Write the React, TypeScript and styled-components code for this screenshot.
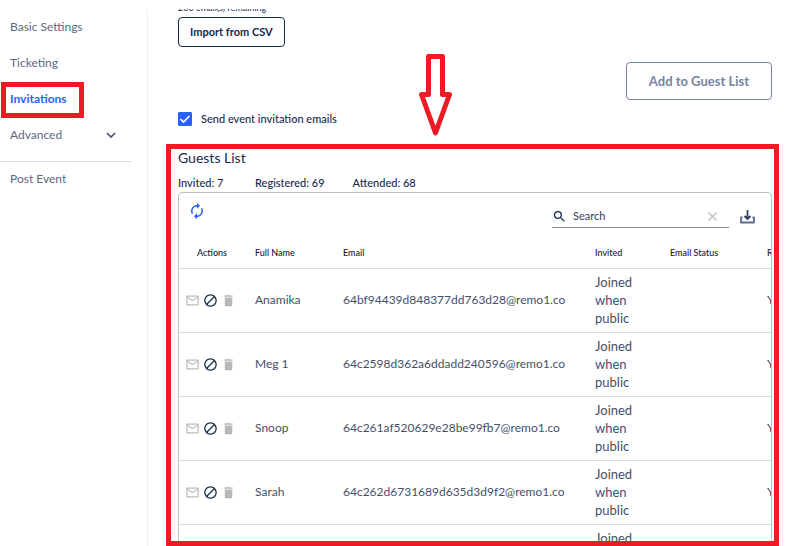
import React from "react";
import styled, { createGlobalStyle } from "styled-components";
import {
  MdAutorenew,
  MdBlock,
  MdDelete,
  MdMailOutline,
  MdSearch,
} from "react-icons/md";

const RED = "#ed1c24";
const NAVY = "#172a4e";
const SLATE = "#44506a";
const BLUE = "#2862fa";

const GlobalStyle = createGlobalStyle`
  *, *::before, *::after { box-sizing: border-box; }
  body {
    margin: 0;
    background: #fff;
    color: ${NAVY};
    font-family: Lato, "Open Sans", sans-serif;
    font-size: 12px;
    line-height: 18px;
  }
  button, input { font: inherit; color: inherit; }
`;

const Page = styled.div`
  display: flex;
  height: 100vh;
  padding-top: 9px;
  overflow: hidden;
`;

const Sidebar = styled.nav`
  flex: 0 0 148px;
  border-right: 1px solid #f0f1f4;
`;

const NavList = styled.ul`
  list-style: none;
  margin: 0;
  padding: 1px 15px 0 0;
`;

const NavItem = styled.li`
  height: 36px;
`;

const NavGroup = styled.li`
  height: 44px;
  border-bottom: 1px solid #dcdee2;
`;

const NavLink = styled.a<{ $active?: boolean }>`
  display: flex;
  align-items: center;
  justify-content: space-between;
  width: ${(p) => (p.$active ? "fit-content" : "auto")};
  height: ${(p) => (p.$active ? "36px" : "34px")};
  margin-left: ${(p) => (p.$active ? "1px" : "0")};
  padding: ${(p) => (p.$active ? "0 12px 2px 4px" : "0 15px 0 10px")};
  border: ${(p) => (p.$active ? `5px solid ${RED}` : "none")};
  color: ${(p) => (p.$active ? BLUE : "#5b6880")};
  font-weight: ${(p) => (p.$active ? 700 : 400)};
  text-decoration: none;
`;

const Main = styled.main`
  position: relative;
  flex: 1;
  min-width: 0;
  display: flex;
  flex-direction: column;
  padding: 0 10px 0 18px;
`;

const Controls = styled.section`
  display: flex;
  flex-direction: column;
  padding: 0 7px 16px 12px;
`;

const Quota = styled.div`
  display: flex;
  align-items: flex-end;
  height: 4px;
  margin-bottom: 4px;
  overflow: hidden;
  font-size: 9px;
  line-height: 10px;
`;

const OutlineButton = styled.button<{ $large?: boolean }>`
  align-self: ${(p) => (p.$large ? "flex-end" : "flex-start")};
  height: ${(p) => (p.$large ? "38px" : "30px")};
  margin-top: ${(p) => (p.$large ? "15px" : "0")};
  padding: ${(p) => (p.$large ? "0 22px" : "0 11px")};
  border: 1px solid ${(p) => (p.$large ? "#7583a3" : NAVY)};
  border-radius: 4px;
  background: #fff;
  color: ${(p) => (p.$large ? "#7583a3" : NAVY)};
  font-size: ${(p) => (p.$large ? "13px" : "11px")};
  font-weight: 700;
`;

const CheckLabel = styled.label`
  display: flex;
  align-items: center;
  align-self: flex-start;
  gap: 9px;
  margin-top: 10px;
  font-size: 11px;
  font-weight: 500;
`;

const Checkbox = styled.input`
  appearance: none;
  width: 14px;
  height: 14px;
  margin: 0;
  border: 1px solid ${BLUE};
  border-radius: 1px;
  background: #fff;
  &:checked { background: ${BLUE}; }
`;

const CheckBoxWrap = styled.span`
  display: grid;
  & > * { grid-area: 1 / 1; }
  & > svg { pointer-events: none; }
`;

const ArrowMark = styled.svg`
  position: absolute;
  left: 271px;
  top: 45px;
`;

const GuestsPanel = styled.section`
  flex: 1;
  min-height: 0;
  padding: 0 2px 0 7px;
  border: 5px solid ${RED};
  overflow: hidden;
`;

const Title = styled.h2`
  margin: 0;
  font-size: 14px;
  line-height: 18px;
  font-weight: 400;
`;

const Stats = styled.div`
  display: flex;
  gap: 28px;
  margin: 7px 0 0;
  font-size: 11px;
  font-weight: 500;
`;

const Stat = styled.span<{ $first?: boolean }>`
  min-width: ${(p) => (p.$first ? "49px" : "69px")};
  white-space: nowrap;
`;

const Card = styled.div`
  border: 1px solid #bfc1c5;
  border-radius: 4px;
  overflow: hidden;
`;

const Toolbar = styled.div`
  display: flex;
  align-items: flex-start;
  justify-content: space-between;
  height: 44px;
  padding: 9px 16px 0 9px;
`;

const ToolGroup = styled.div`
  display: flex;
  align-items: flex-end;
  gap: 10px;
`;

const IconButton = styled.button<{ $color: string }>`
  display: flex;
  padding: 0;
  border: 0;
  background: none;
  color: ${(p) => p.$color};
`;

const DownloadButton = styled(IconButton)`
  padding-bottom: 3px;
`;

const SearchField = styled.div`
  display: flex;
  align-items: center;
  gap: 6px;
  width: 177px;
  height: 26px;
  padding: 3px 11px 0 0;
  border-bottom: 1px solid #8b8d93;
`;

const SearchInput = styled.input`
  flex: 1;
  min-width: 0;
  padding: 0;
  border: 0;
  outline: 0;
  background: none;
  font-size: 11px;
  font-weight: 500;
  &::placeholder { color: #3f4b66; opacity: 1; }
`;

const GuestTable = styled.table`
  width: 100%;
  min-width: 700px;
  table-layout: fixed;
  border-collapse: separate;
  border-spacing: 0;
`;

const Col = styled.col<{ $width?: number }>`
  width: ${(p) => (p.$width ? `${p.$width}px` : "auto")};
`;

const HeadCell = styled.th`
  height: 32px;
  padding: 0;
  border-bottom: 1px solid #dcdcdc;
  color: #101c33;
  font-size: 9px;
  line-height: 18px;
  font-weight: 500;
  text-align: left;
  &:first-child { padding-left: 18px; }
`;

const Cell = styled.td`
  padding: 4px 0 5px;
  border-bottom: 1px solid #dcdcdc;
  color: ${SLATE};
  vertical-align: middle;
  white-space: nowrap;
`;

const StatusText = styled.div`
  width: 50px;
  font-size: 13px;
  white-space: normal;
`;

const RowActions = styled.div`
  display: flex;
  gap: 3px;
  padding-left: 6px;
`;

const guests = [
  { name: "Anamika", email: "64bf94439d848377dd763d28@remo1.co" },
  { name: "Meg 1", email: "64c2598d362a6ddadd240596@remo1.co" },
  { name: "Snoop", email: "64c261af520629e28be99fb7@remo1.co" },
  { name: "Sarah", email: "64c262d6731689d635d3d9f2@remo1.co" },
  { name: "", email: "" },
];

export default function App() {
  return (
    <>
      <GlobalStyle />
      <Page>
        <Sidebar aria-label="Event settings">
          <NavList>
            <NavItem><NavLink href="#basic">Basic Settings</NavLink></NavItem>
            <NavItem><NavLink href="#ticketing">Ticketing</NavLink></NavItem>
            <NavItem><NavLink href="#invitations" $active>Invitations</NavLink></NavItem>
            <NavGroup>
              <NavLink href="#advanced">
                Advanced
                <svg width="12" height="8" viewBox="0 0 12 8" fill="none" stroke="#44536f" strokeWidth="1.6" aria-hidden="true">
                  <path d="M2 2l4 4 4-4" />
                </svg>
              </NavLink>
            </NavGroup>
            <NavItem><NavLink href="#post-event">Post Event</NavLink></NavItem>
          </NavList>
        </Sidebar>

        <Main>
          <Controls>
            <Quota>200 email(s) remaining</Quota>
            <OutlineButton type="button">Import from CSV</OutlineButton>
            <OutlineButton type="button" $large>Add to Guest List</OutlineButton>
            <CheckLabel>
              <CheckBoxWrap>
                <Checkbox type="checkbox" defaultChecked />
                <svg width="14" height="14" viewBox="0 0 14 14" fill="none" stroke="#fff" strokeWidth="1.6" aria-hidden="true">
                  <path d="M2.5 7l3 3 6-6" />
                </svg>
              </CheckBoxWrap>
              Send event invitation emails
            </CheckLabel>
          </Controls>

          <GuestsPanel>
            <Title>Guests List</Title>
            <Stats>
              <Stat $first>Invited: 7</Stat>
              <Stat>Registered: 69</Stat>
              <Stat>Attended: 68</Stat>
            </Stats>
            <Card>
              <Toolbar>
                <IconButton type="button" aria-label="Refresh" $color={BLUE}>
                  <MdAutorenew size={18} />
                </IconButton>
                <ToolGroup>
                  <SearchField>
                    <MdSearch size={15} color={NAVY} />
                    <SearchInput type="text" placeholder="Search" aria-label="Search" />
                    <IconButton type="button" aria-label="Clear" $color="#bcbcbc">
                      <svg width="11" height="11" viewBox="0 0 11 11" fill="none" stroke="currentColor" strokeWidth="1.3">
                        <path d="M1.5 1.5l8 8M9.5 1.5l-8 8" />
                      </svg>
                    </IconButton>
                  </SearchField>
                  <DownloadButton type="button" aria-label="Download" $color="#5d6c8b">
                    <svg width="16" height="16" viewBox="0 0 16 16" fill="none" stroke="currentColor" strokeWidth="1.8">
                      <path d="M3.5 8.5H2V13.500h13V8.500h-1.5" strokeLinejoin="round" />
                      <path d="M8.5 1v9M5.500 7l3 3 3-3" stroke="#34415f" />
                    </svg>
                  </DownloadButton>
                </ToolGroup>
              </Toolbar>
              <GuestTable>
                <colgroup>
                  <Col $width={76} />
                  <Col $width={88} />
                  <Col $width={252} />
                  <Col $width={75} />
                  <Col $width={97} />
                  <Col />
                </colgroup>
                <thead>
                  <tr>
                    <HeadCell>Actions</HeadCell>
                    <HeadCell>Full Name</HeadCell>
                    <HeadCell>Email</HeadCell>
                    <HeadCell>Invited</HeadCell>
                    <HeadCell>Email Status</HeadCell>
                    <HeadCell>Registered</HeadCell>
                  </tr>
                </thead>
                <tbody>
                  {guests.map((g, i) => (
                    <tr key={i}>
                      <Cell>
                        {g.name && (
                          <RowActions>
                            <IconButton type="button" aria-label={`Email ${g.name}`} $color="#bdbdbd">
                              <MdMailOutline size={15} />
                            </IconButton>
                            <IconButton type="button" aria-label={`Block ${g.name}`} $color={NAVY}>
                              <MdBlock size={15} />
                            </IconButton>
                            <IconButton type="button" aria-label={`Delete ${g.name}`} $color="#b8b8b8">
                              <MdDelete size={15} />
                            </IconButton>
                          </RowActions>
                        )}
                      </Cell>
                      <Cell>{g.name}</Cell>
                      <Cell>{g.email}</Cell>
                      <Cell><StatusText>Joined when public</StatusText></Cell>
                      <Cell />
                      <Cell>{g.name && "Yes"}</Cell>
                    </tr>
                  ))}
                </tbody>
              </GuestTable>
            </Card>
          </GuestsPanel>

          <ArrowMark width="34" height="84" viewBox="0 0 34 84" fill="#fff" stroke={RED} strokeWidth="5" aria-hidden="true">
            <path d="M9.5 2.5h14v38h7L16.5 79 2.500 40.5h7z" strokeLinejoin="round" />
          </ArrowMark>
        </Main>
      </Page>
    </>
  );
}
